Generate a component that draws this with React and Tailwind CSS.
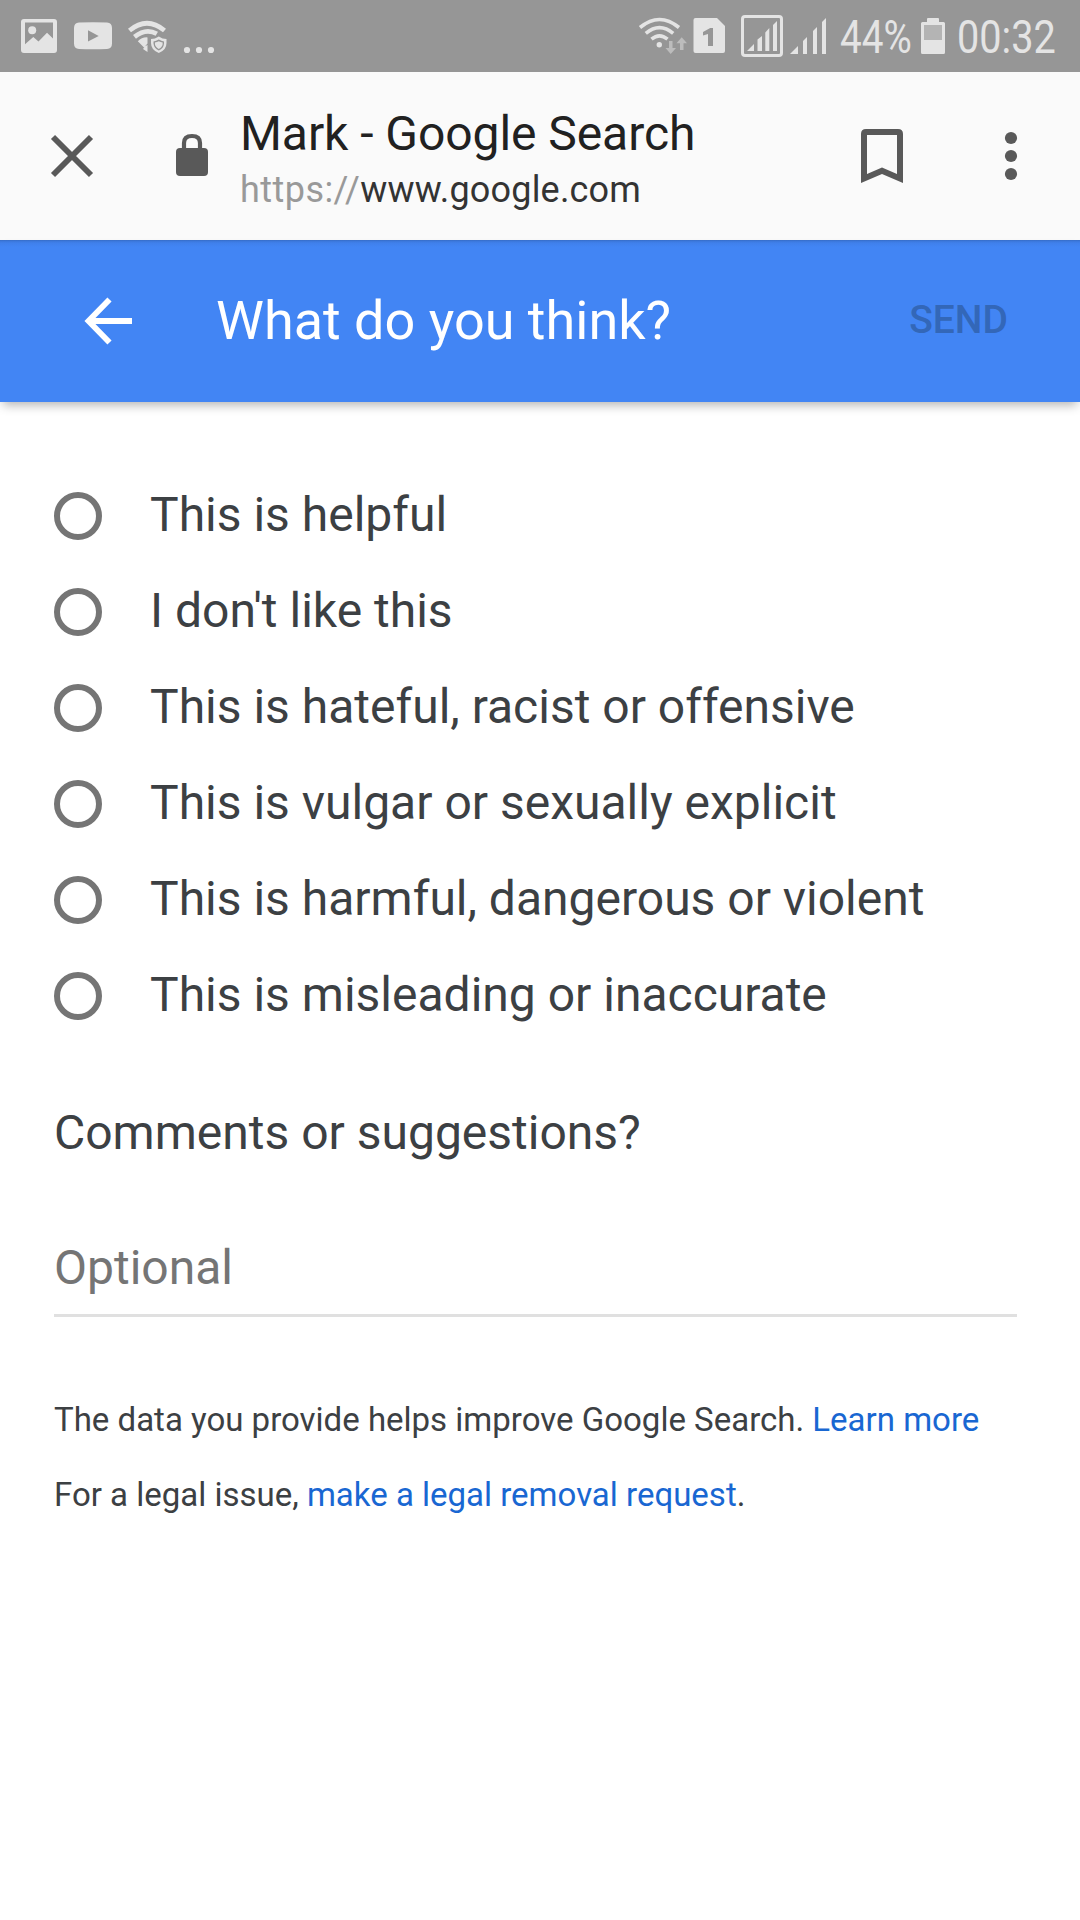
const options = [
  'This is helpful',
  "I don't like this",
  'This is hateful, racist or offensive',
  'This is vulgar or sexually explicit',
  'This is harmful, dangerous or violent',
  'This is misleading or inaccurate',
];

function StatusLeftIcons() {
  return (
    <svg width="240" height="72" viewBox="0 0 240 72" fill="#e4e4e4">
      <path fillRule="evenodd" d="M24 19H54Q57 19 57 22V50Q57 53 54 53H24Q21 53 21 50V22Q21 19 24 19ZM25 22.6V44.3L33.3 37L38.5 41.5L47 32.7L53 38.5V22.6Z" />
      <circle cx="32.2" cy="30.2" r="4" />
      <path fillRule="evenodd" d="M79 22.6Q93 21.8 107 22.6Q112 23 112 28V43.500Q112 48.600 107 49Q93 49.600 79 49Q74 48.600 74 43.500V28Q74 23 79 22.600ZM88 30.300V41.500L98.700 35.900Z" />
      <g fill="none" stroke="#e4e4e4" strokeWidth="4.700">
        <path d="M129.500 30.500Q147 16 164.500 30.500" />
        <path d="M134.500 36.800Q146 27.600 156.800 33.800" />
      </g>
      <path d="M137.800 41.300Q142 37 147.500 37.400V43.500L144 47.500ZM143 49Q145 45.500 147.500 45V52Z" />
      <path fillRule="evenodd" d="M158.800 36.500Q162.500 39 166.500 39V43Q166.500 50 158.800 53Q151 50 151 43V39Q155 39 158.800 36.500ZM158.800 39.500Q156 41.200 153.500 41.400V43.500Q154 48.500 158.800 50.500Q163.700 48.500 164 43.500V41.400Q161.500 41.200 158.800 39.500Z" />
      <path d="M158.800 41.300Q160.500 42.300 162.700 42.600Q163 47 158.800 49Q154.600 47 154.900 42.600Q157 42.300 158.800 41.300Z" />
      <circle cx="187" cy="50" r="3.100" />
      <circle cx="199" cy="50" r="3.100" />
      <circle cx="211" cy="50" r="3.100" />
    </svg>
  );
}

function StatusRightIcons() {
  return (
    <svg width="196" height="72" viewBox="636 0 196 72" fill="#e4e4e4">
      <g fill="none" stroke="#e4e4e4" strokeWidth="3.600">
        <path d="M640 27.500Q659.500 11.500 679 27.500" />
        <path d="M645.800 33.300Q659.500 22 673.200 33.300" />
        <path d="M651.500 39.200Q659.500 32.500 667.500 39.200" />
      </g>
      <circle cx="659.300" cy="44.700" r="2.700" />
      <g fill="#bcbcbc">
        <path d="M669 41H672.500V48H676L670.700 54L665.500 48H669Z" />
        <path d="M680 50H683.500V43.300H687L681.700 37.200L676.500 43.300H680Z" />
      </g>
      <path d="M695.500 18H717L725 26V51Q725 53 723 53H695.500Q693.500 53 693.500 51V20Q693.500 18 695.500 18Z" />
      <path fill="#969696" d="M703 32L710.200 28H713V46H708V34L703 35.500Z" />
      <rect x="742.500" y="16.500" width="39" height="39" rx="2.500" fill="none" stroke="#e4e4e4" strokeWidth="3" />
      <path d="M747 51L754 44V51ZM757.500 51V39.500L762 36V51ZM765.300 51V32.500L769.300 28V51ZM773 51V25L777 21V51Z" />
      <path d="M790 54L798 46V54ZM803 54V41L807 37V54ZM813 54V31L817 27V54ZM822 54V22L826 18V54Z" />
    </svg>
  );
}

export default function App() {
  return (
    <div className="h-[1920px] w-[1080px] overflow-hidden bg-white font-['Roboto',sans-serif] text-[#3c4043]">
      <div className="flex h-[72px] justify-between bg-[#969696] text-[46px] leading-[74px] text-[#e4e4e4]">
        <StatusLeftIcons />
        <div className="flex">
          <StatusRightIcons />
          <div className="ml-[8px] w-[81px] origin-left scale-x-[0.84] whitespace-nowrap">44%</div>
          <svg width="24" height="72" viewBox="0 0 24 72" fill="#e4e4e4">
            <path d="M7 18H17Q18 18 18 19V22H22.500Q24 22 24 23.500V52.500Q24 54 22.500 54H1.500Q0 54 0 52.500V23.500Q0 22 1.500 22H6V19Q6 18 7 18Z" />
            <path fill="#b4b4b4" d="M3 25H21V40H3Z" />
          </svg>
          <div className="ml-[12px] w-[123px] origin-left scale-x-[0.862] whitespace-nowrap">00:32</div>
        </div>
      </div>
      <div className="flex h-[168px] bg-[#fafafa]">
        <svg width="240" height="168" viewBox="0 72 240 168" fill="#595959">
          <path d="M53 137L91 175M91 137L53 175" stroke="#595959" strokeWidth="5.800" />
          <path d="M184 150V143Q184 136 192 136Q200 136 200 143V150" fill="none" stroke="#595959" strokeWidth="4.200" />
          <rect x="176" y="148" width="32" height="28" rx="4" />
        </svg>
        <div className="w-[600px] pt-[30px]">
          <div className="text-[48px] leading-[64px] tracking-[-0.06px] text-[#212121]">Mark - Google Search</div>
          <div className="text-[36px] leading-[48px] tracking-[0.18px] text-[#333]"><span className="tracking-[0.45px] text-[#999]">https://</span>www.google.com</div>
        </div>
        <svg width="240" height="168" viewBox="840 72 240 168" fill="#595959">
          <path fillRule="evenodd" d="M866 129H898Q903 129 903 134V183L882 174L861 183V134Q861 129 866 129ZM867 135V174L882 167.500L897 174V135Z" />
          <circle cx="1011" cy="138" r="6.100" />
          <circle cx="1011" cy="156" r="6.100" />
          <circle cx="1011" cy="174" r="6.100" />
        </svg>
      </div>
      <div className="flex h-[162px] bg-[#4285f4] bg-[linear-gradient(#356ac3_0px,#3b77da_1px,#4080eb_3px,#4285f4_7px)] pr-[72px] shadow-[0_6px_10px_-3px_rgba(0,0,0,0.3)]">
        <svg width="216" height="162" viewBox="0 240 216 162">
          <path d="M132 321H88M109.500 299.500L88.500 321L109.500 342.500" fill="none" stroke="#fff" strokeWidth="5.800" />
        </svg>
        <div className="flex-1 text-[54px] leading-[162px] text-white">What do you think?</div>
        <div className="text-[39px] leading-[160px] font-medium text-[#3367b8]">SEND</div>
      </div>
      <div className="pt-[66px]">
        {options.map((o) => (
          <div key={o} className="flex h-24 items-center pl-[54px]">
            <div className="size-12 rounded-full border-[6px] border-[#757575]" />
            <div className="ml-12 pb-0.5 text-[48px] leading-[72px]">{o}</div>
          </div>
        ))}
      </div>
      <div className="mx-[54px] pt-[53px] text-[48px] leading-[72px]">
        <div>Comments or suggestions?</div>
        <div className="mr-[9px] mt-[63px] h-[85px] border-b-[3px] border-[#e0e0e0] text-[#757575]">Optional</div>
      </div>
      <div className="ml-[54px] mt-[79px] text-[33px] leading-[48px]">
        <div>The data you provide helps improve Google Search. <span className="text-[#1967d2]">Learn more</span></div>
        <div className="mt-[27px]">For a legal issue, <span className="text-[#1967d2]">make a legal removal request</span>.</div>
      </div>
    </div>
  );
}
